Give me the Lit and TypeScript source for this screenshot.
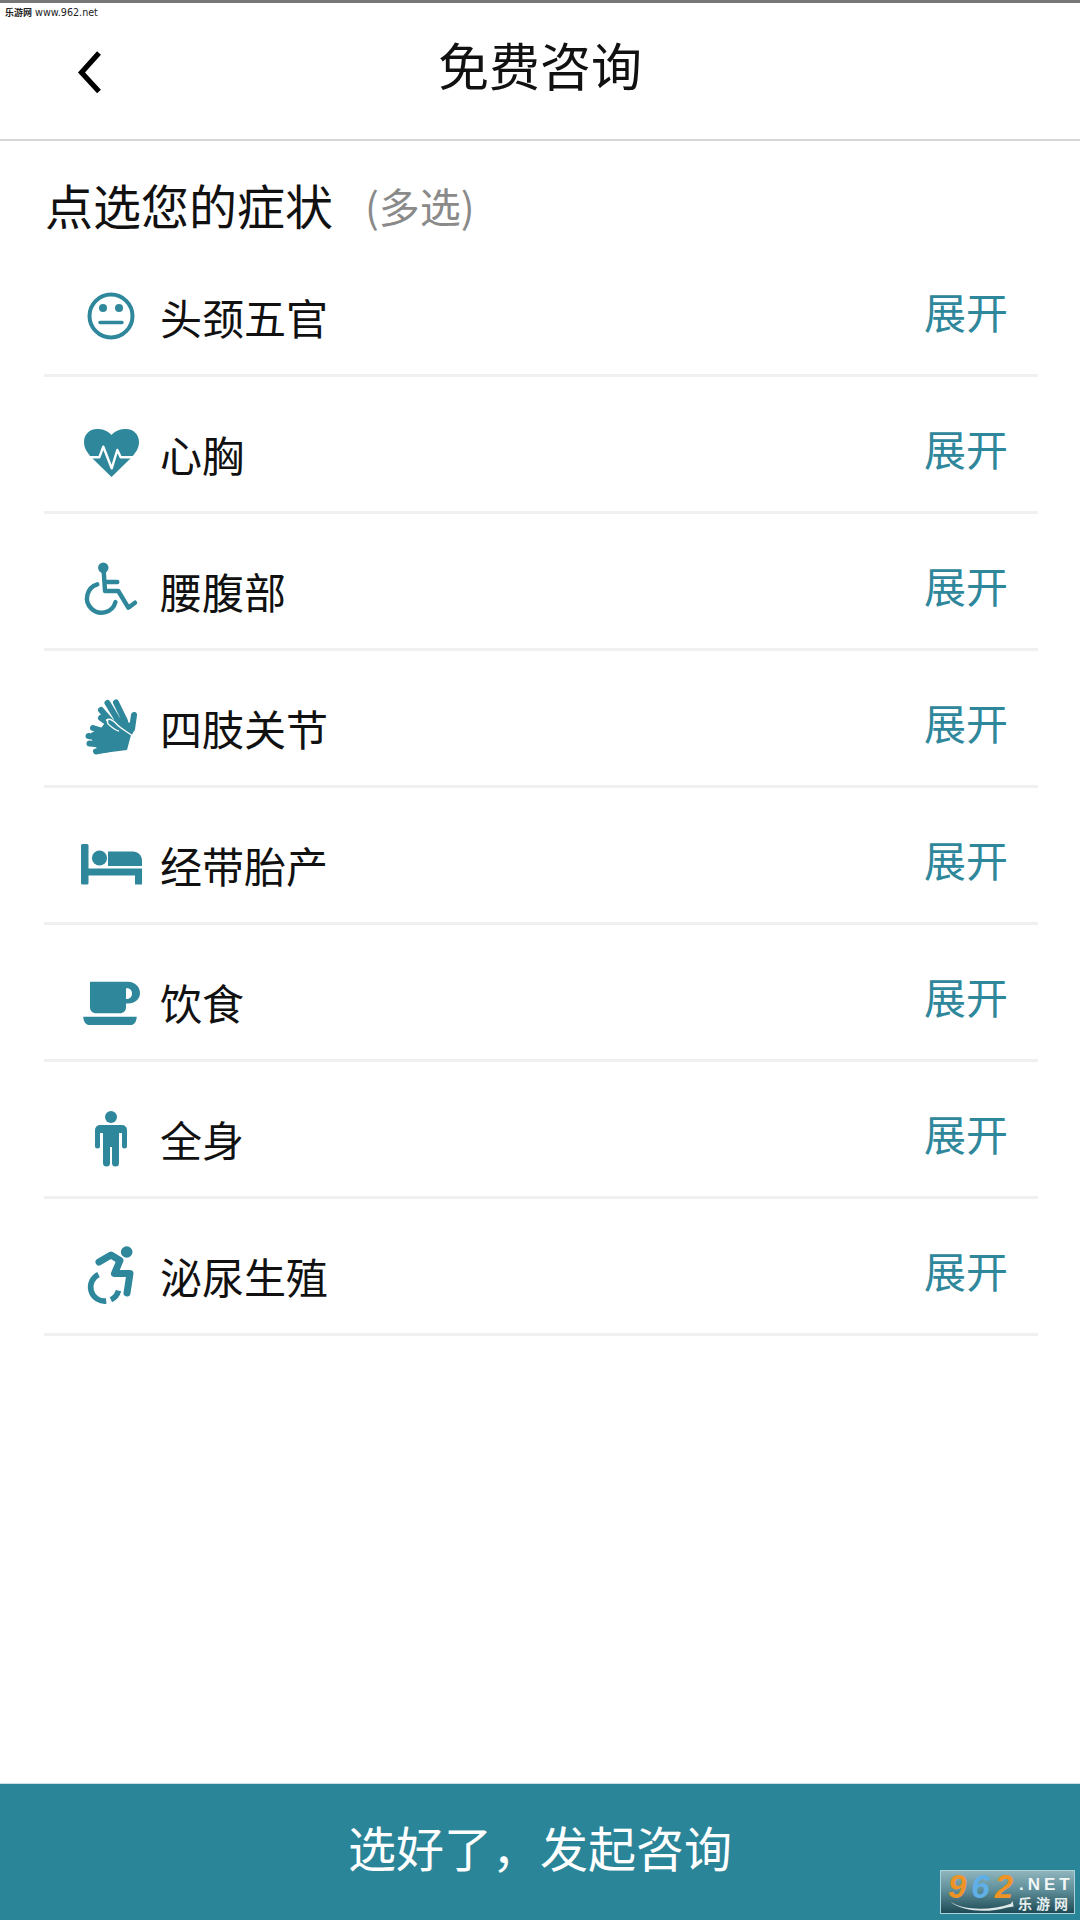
import { LitElement, html, css, svg } from "lit";
import { customElement } from "lit/decorators.js";

const ICONS = {
  face: svg`<circle cx="32" cy="32" r="21.5" fill="none" stroke="currentColor" stroke-width="4"/>
    <circle cx="24" cy="24" r="4"/><circle cx="40" cy="24" r="4"/>
    <path d="M21 38.5H43" fill="none" stroke="currentColor" stroke-width="3.4" stroke-linecap="round"/>`,
  heart: svg`<path d="M32.5 14C37 9 42 8 47 8C55 8 60 14 60 21C60 28 56 32 53 36L32.5 56L12 36C9 32 5 28 5 21C5 14 10 8 18 8C23 8 28 9 32.5 14Z"/>
    <path d="M4 36.3H20.3L24.3 25.7L32.7 47.3L38.3 29L41.7 36.3H62" fill="none" stroke="#fff" stroke-width="2.4" stroke-linejoin="round"/>`,
  wheel: svg`<circle cx="24.3" cy="9.7" r="5.2"/>
    <path d="M24.5 10L26 33H39.3L49.3 49.7L56 44.7M26 24H38.3" fill="none" stroke="currentColor" stroke-width="4.4" stroke-linejoin="round" stroke-linecap="round"/>
    <path d="M18.3 26.3A14.5 14.5 0 1 0 36.5 44" fill="none" stroke="currentColor" stroke-width="4.4" stroke-linecap="round"/>`,
  sign: svg`<g fill="none" stroke="currentColor" stroke-width="6" stroke-linecap="round">
      <path d="M22 15L35 30M28.5 8L40 27M37 7.5L46 26M22 23L32 30M55 20L53 34"/>
    </g>
    <path d="M33 25L46 22L50 28L56 22L54 38L52 41L40 38Z"/>
    <path d="M29 24C33 24 36 28 38 30C42 34 48 36 52 40L48 55L24 58L14 50L12 38L22 33Z"/>
    <path d="M27 25.5C31 22 36 27 38.5 30C43 34.5 48 36.5 53 40.5M29 25C27 28 30 30 34 33C37 35 38 36 40 36" fill="none" stroke="#fff" stroke-width="1.4"/>
    <g fill="none" stroke="currentColor" stroke-width="6" stroke-linecap="round">
      <path d="M14 33L30 38M9.5 41L28 44M10.5 48.5L28 50M17 56.5L30 54"/>
    </g>`,
  bed: svg`<rect x="2" y="12" width="7.5" height="40.5" rx="1.5"/>
    <circle cx="20.5" cy="26" r="7.6"/>
    <path d="M29 19.5H54C59 19.5 63 23.5 63 28.5V34H29Z"/>
    <path d="M9 36.5H63V52.5H56V43.5H9Z"/>`,
  cup: svg`<path fill-rule="evenodd" d="M11 12.7H49C56 12.7 61 18 61 24C61 30 56 34.5 49 34.5H47V38.5C47 41.5 44.5 44.3 41 44.3H17C13.5 44.3 11 41.5 11 38.5ZM47 19.3V30H48C51 30 53 27.5 53 24.5C53 21.5 51 19.3 48 19.3Z"/>
    <path d="M4.3 47.7H57.7C57.7 52.5 55 56 51.5 56H10.5C7 56 4.3 52.5 4.3 47.7Z"/>`,
  male: svg`<circle cx="32" cy="11" r="6"/>
    <path d="M21 19H43A5 5 0 0 1 48 24V40A2.5 2.5 0 0 1 43 40V27H40V57A3.5 3.5 0 0 1 33 57V41H31V57A3.5 3.5 0 0 1 24 57V27H21V40A2.5 2.5 0 0 1 16 40V24A5 5 0 0 1 21 19Z"/>`,
  access: svg`<circle cx="47.7" cy="9" r="5.8"/>
    <path d="M20 19L32 12L41 17.5L35.5 30.5H51L48 50" fill="none" stroke="currentColor" stroke-width="7" stroke-linejoin="round" stroke-linecap="round"/>
    <path d="M19.5 31.5A14 14 0 0 0 27.2 58" fill="none" stroke="currentColor" stroke-width="5.6"/>
    <path d="M31.9 56.7A14 14 0 0 0 39.5 47.6" fill="none" stroke="currentColor" stroke-width="5.6"/>`,
};

const ROWS: [keyof typeof ICONS, string][] = [
  ["face", "头颈五官"],
  ["heart", "心胸"],
  ["wheel", "腰腹部"],
  ["sign", "四肢关节"],
  ["bed", "经带胎产"],
  ["cup", "饮食"],
  ["male", "全身"],
  ["access", "泌尿生殖"],
];

@customElement("app-root")
export class AppRoot extends LitElement {
  static styles = css`
    :host {
      display: block;
      width: 1080px;
      height: 1920px;
      background: #fff;
      font-family: "Noto Sans CJK SC", "Liberation Sans", sans-serif;
      color: #111;
    }
    .page { position: relative; display: flex; flex-direction: column; height: 1920px; overflow: hidden; }
    .topline { height: 3px; background: #777; flex: none; }
    .header {
      flex: none;
      height: 136px;
      box-sizing: content-box;
      border-bottom: 2px solid #d6d6d6;
      display: flex;
      justify-content: center;
      align-items: flex-start;
      position: relative;
    }
    .title { font-size: 51px; line-height: 60px; margin-top: 31px; }
    .back { position: absolute; left: 73px; top: 43px; width: 36px; height: 50px; }
    .mark {
      position: absolute; left: 5px; top: 3px;
      font-size: 9.6px; line-height: 14px; color: #222; white-space: pre;
      font-family: "DejaVu Sans", "Noto Sans CJK SC", sans-serif;
    }
    .mark span { font-family: "Noto Sans CJK SC", sans-serif; font-size: 9px; font-weight: 700; }
    .heading {
      flex: none;
      height: 99px;
      padding-left: 45px;
      display: flex;
      align-items: flex-start;
    }
    .heading b { font-weight: 400; font-size: 48px; line-height: 60px; margin-top: 33px; }
    .heading i { font-style: normal; font-size: 41px; line-height: 60px; margin: 34px 0 0 32px; color: #8a8a8a; }
    .list { margin: 0 42px 0 44px; display: flex; flex-direction: column; }
    .row {
      height: 134px;
      border-bottom: 3px solid #f0f0f2;
      display: flex;
      align-items: flex-start;
    }
    .icon { width: 64px; height: 64px; margin: 44px 17px 0 35px; color: #2f879b; fill: currentColor; flex: none; }
    .icon svg { display: block; width: 64px; height: 64px; overflow: visible; }
    .name { font-size: 42px; line-height: 50px; margin-top: 52px; }
    .more { margin: 46px 30px 0 auto; font-size: 42px; line-height: 50px; color: #2f879b; }
    .spacer { flex: 1; }
    .cta {
      flex: none;
      height: 124px;
      padding-bottom: 12px;
      background: #2b8599;
      color: #fff;
      font-size: 48px;
      display: flex;
      justify-content: center;
      align-items: center;
      box-shadow: 0 -1px 1px #cfdfe3;
    }
    .logo {
      position: absolute; left: 940px; top: 1870px; width: 133px; height: 42px;
      border: 1px solid #a9d3da;
      background: linear-gradient(#8fb4bc, #5f8f9a 45%, #1d4a55);
    }
    .n { position: absolute; left: 7px; top: -2px; font: italic 700 33px/36px "Liberation Sans", sans-serif; color: #ee9427; letter-spacing: 5px; }
    .n em { font-style: inherit; color: #5fb0e6; }
    .net { position: absolute; left: 78px; top: 5px; font: 700 17px/17px "Liberation Sans", sans-serif; color: #f2f6f6; letter-spacing: 4px; }
    .cn { position: absolute; left: 77px; top: 23px; font: 700 14px/18px "Noto Sans CJK SC", sans-serif; color: #e6eeee; letter-spacing: 4px; }
    .swoosh { position: absolute; left: 7px; top: 29px; width: 68px; height: 13px; }
  `;

  render() {
    return html`
      <div class="page">
        <div class="topline"></div>
        <div class="header">
          <div class="mark"><span>乐游网</span> www.962.net</div>
          <svg class="back" viewBox="0 0 36 50"><path d="M26 7L8.5 26.5L26 45.5" fill="none" stroke="#000" stroke-width="5.2"/></svg>
          <div class="title">免费咨询</div>
        </div>
        <div class="heading"><b>点选您的症状</b><i>(多选)</i></div>
        <div class="list">
          ${ROWS.map(
            ([icon, name]) => html`
              <div class="row">
                <div class="icon"><svg viewBox="0 0 64 64">${ICONS[icon]}</svg></div>
                <div class="name">${name}</div>
                <div class="more">展开</div>
              </div>
            `
          )}
        </div>
        <div class="spacer"></div>
        <div class="cta">选好了，发起咨询</div>
        <div class="logo">
          <div class="n">9<em>6</em>2</div>
          <div class="net">.NET</div>
          <div class="cn">乐游网</div>
          <svg class="swoosh" viewBox="0 0 70 14"><path d="M1 2C14 11 44 12 66 4L68 1L69 7L62 8C42 14 14 13 1 2Z" fill="#dfe8e8"/></svg>
        </div>
      </div>
    `;
  }
}
